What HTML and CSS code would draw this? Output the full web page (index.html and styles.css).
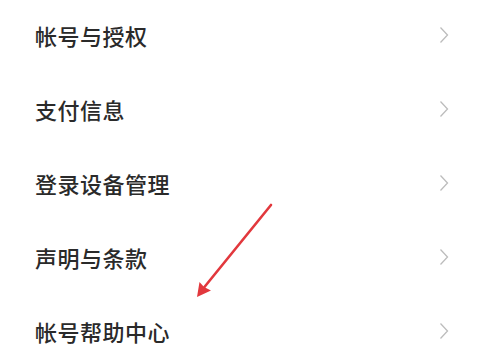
FILE: index.html
```html
<!DOCTYPE html>
<html lang="zh-CN">
<head>
<meta charset="utf-8">
<link rel="stylesheet" href="styles.css">
</head>
<body>
<div class="page">
  <ul class="menu">
    <li class="row"><span class="label">帐号与授权</span><svg class="chev" viewBox="0 0 10 18"><path d="M1.5 1.5 L8.5 9 L1.5 16.5"/></svg></li>
    <li class="row"><span class="label">支付信息</span><svg class="chev" viewBox="0 0 10 18"><path d="M1.5 1.5 L8.5 9 L1.5 16.5"/></svg></li>
    <li class="row"><span class="label">登录设备管理</span><svg class="chev" viewBox="0 0 10 18"><path d="M1.5 1.5 L8.5 9 L1.5 16.5"/></svg></li>
    <li class="row"><span class="label">声明与条款</span><svg class="chev" viewBox="0 0 10 18"><path d="M1.5 1.5 L8.5 9 L1.5 16.5"/></svg></li>
    <li class="row"><span class="label">帐号帮助中心</span><svg class="chev" viewBox="0 0 10 18"><path d="M1.5 1.5 L8.5 9 L1.5 16.5"/></svg></li>
  </ul>
  <svg class="arrow" viewBox="0 0 492 350" width="492" height="350">
    <line x1="271" y1="205" x2="202" y2="290" stroke="#e2383d" stroke-width="2.6" stroke-linecap="round"/>
    <path d="M197 297 L199.5 282 L204 287 L211 290.5 Z" fill="#e2383d"/>
  </svg>
</div>
</body>
</html>
```
FILE: styles.css
```css
html, body {
  margin: 0;
  padding: 0;
  background: #ffffff;
}
.page {
  position: relative;
  width: 492px;
  height: 350px;
  overflow: hidden;
  font-family: "Noto Sans CJK SC", "Noto Sans", sans-serif;
}
.menu {
  list-style: none;
  margin: -2px 0 0 0;
  padding: 0;
}
.row {
  height: 74px;
  display: flex;
  align-items: center;
  justify-content: space-between;
  padding: 0 43px 0 35px;
}
.label {
  font-size: 22px;
  line-height: 1;
  color: #2a2a2a;
  font-weight: 500;
  letter-spacing: 0.5px;
}
.chev {
  width: 10px;
  height: 18px;
  fill: none;
  stroke: #bcbcbc;
  stroke-width: 1.3;
}
.arrow {
  position: absolute;
  left: 0;
  top: 0;
  pointer-events: none;
}
```
